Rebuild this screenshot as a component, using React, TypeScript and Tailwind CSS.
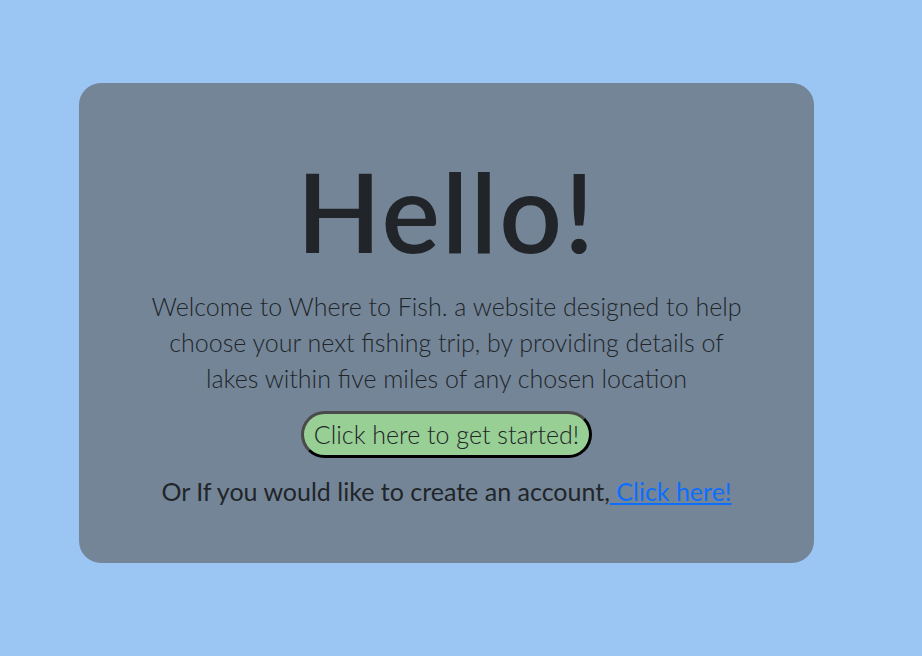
export default function App() {
  return (
    <div className="min-h-[656px] w-full bg-[#9bc6f3] pt-[83px] pl-[79px]" style={{ fontFamily: "Lato, 'Noto Sans', sans-serif" }}>
      <div className="flex h-[480px] w-[735px] flex-col items-center rounded-[22px] bg-[#748598] text-[#212529]">
        <h1 className="mt-[68px] text-[110px] leading-[118px] font-semibold tracking-[2px]">Hello!</h1>
        <p className="mt-[19px] w-[610px] text-center text-[25px] font-light leading-[36px]">
          Welcome to Where to Fish. a website designed to help choose your next fishing trip, by providing details of
          lakes within five miles of any chosen location
        </p>
        <button className="mt-[15px] h-[47px] rounded-full border-[3px] border-t-[#4a4a4a] border-l-[#4a4a4a] border-r-black border-b-black bg-[#98cf94] px-[10px] text-[25px] font-light text-[#212529]">
          Click here to get started!
        </button>
        <p className="mt-[15px] text-[25px] font-normal text-[#212529]">
          Or If you would like to create an account,
          <a href="#" className="font-normal text-[#0d6efd] underline"> Click here!</a>
        </p>
      </div>
    </div>
  );
}
